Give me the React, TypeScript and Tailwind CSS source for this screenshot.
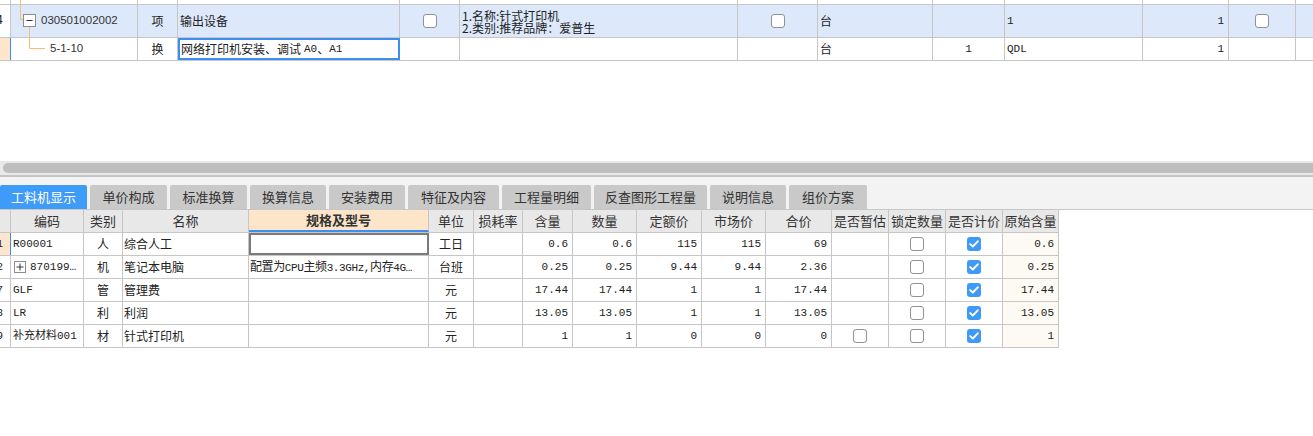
import React from 'react';

const cjk = "font-['Noto_Sans_CJK_SC',sans-serif]";
const mono = "font-['Liberation_Mono','Noto_Sans_CJK_SC',monospace]";

function Box({ on }: { on?: boolean }) {
  if (on) {
    return (
      <span className="w-[14px] h-[14px] rounded-[3px] bg-[#3f99f7] flex items-center justify-center">
        <svg width="10" height="8" viewBox="0 0 10 8">
          <path d="M1.2 4.1 L3.8 6.5 L8.8 1.3" stroke="#fff" strokeWidth="1.9" fill="none" strokeLinecap="round" strokeLinejoin="round" />
        </svg>
      </span>
    );
  }
  return <span className="w-[14px] h-[14px] rounded-[3px] border border-[#929292] bg-white" />;
}

const base = 'shrink-0 h-full flex items-center overflow-hidden whitespace-nowrap';
const cell = `${base} border-r border-[#c6c6c6]`;

function TopTable() {
  return (
    <div className="flex flex-col">
      {/* partial row above */}
      <div className="flex h-[5px] border-b border-[#c6c6c6]">
        <div className={`${cell} w-[11px]`} />
        <div className={`${cell} w-[127px] relative`}>
          <svg className="absolute left-0 top-0" width="126" height="4">
            <line x1="9.5" y1="0" x2="9.5" y2="4" stroke="#f7bf6d" />
          </svg>
        </div>
        <div className={`${cell} w-[40px]`} />
        <div className={`${cell} w-[222px]`} />
        <div className={`${cell} w-[60px]`} />
        <div className={`${cell} w-[278px]`} />
        <div className={`${cell} w-[80px]`} />
        <div className={`${cell} w-[115px]`} />
        <div className={`${cell} w-[72px]`} />
        <div className={`${cell} w-[138px]`} />
        <div className={`${cell} w-[86px]`} />
        <div className={`${cell} w-[67px]`} />
        <div className="flex-1" />
      </div>
      {/* row 1 */}
      <div className="flex h-[33px] border-b border-[#c6c6c6] bg-[#dde9fb] text-[12px] text-[#222]">
        <div className={`${cell} w-[11px] bg-white justify-end pr-[7px] ${mono}`}>4</div>
        <div className={`${cell} w-[127px] relative pl-[30px]`}>
          <svg className="absolute left-0 top-0" width="126" height="32">
            <line x1="9.5" y1="0" x2="9.5" y2="14.5" stroke="#f7bf6d" />
            <line x1="9.5" y1="14.5" x2="12" y2="14.5" stroke="#f7bf6d" />
            <line x1="18.5" y1="22" x2="18.5" y2="32" stroke="#f7bf6d" />
            <rect x="12.5" y="9.5" width="12" height="12" fill="#fff" stroke="#8d8d8d" />
            <line x1="15.5" y1="15.5" x2="21.5" y2="15.5" stroke="#333" />
          </svg>
          <span className="font-['Liberation_Sans',sans-serif] text-[11.5px] text-[#333]">030501002002</span>
        </div>
        <div className={`${cell} w-[40px] justify-center ${cjk}`}>项</div>
        <div className={`${cell} w-[222px] pl-[2px] ${cjk}`}>输出设备</div>
        <div className={`${cell} w-[60px] justify-center`}><Box /></div>
        <div className={`${cell} w-[278px] pl-[2px] ${cjk}`}>
          <div className="leading-[12px] text-[12px] pt-[1px]">
            <div className="h-[12px]">1.名称:针式打印机</div>
            <div className="h-[12px]">2.类别:推荐品牌：爱普生</div>
          </div>
        </div>
        <div className={`${cell} w-[80px] justify-center`}><Box /></div>
        <div className={`${cell} w-[115px] pl-[2px] ${cjk}`}>台</div>
        <div className={`${cell} w-[72px]`} />
        <div className={`${cell} w-[138px] pl-[2px] ${mono} text-[11px]`}>1</div>
        <div className={`${cell} w-[86px] justify-end pr-[4px] ${mono} text-[11px]`}>1</div>
        <div className={`${cell} w-[67px] justify-center`}><Box /></div>
        <div className="flex-1" />
      </div>
      {/* row 2 */}
      <div className="flex h-[23px] border-b border-[#c6c6c6] bg-white text-[12px] text-[#222]">
        <div className={`${base} w-[11px] bg-[#fde6cb] border-r border-[#3b8ff0]`} />
        <div className={`${cell} w-[127px] relative pl-[39px]`}>
          <svg className="absolute left-0 top-0" width="126" height="22">
            <line x1="18.5" y1="0" x2="18.5" y2="10.5" stroke="#f7bf6d" />
            <line x1="18.5" y1="10.5" x2="34" y2="10.5" stroke="#f7bf6d" />
          </svg>
          <span className="font-['Liberation_Sans',sans-serif] text-[11.5px] text-[#333]">5-1-10</span>
        </div>
        <div className={`${cell} w-[40px] justify-center ${cjk}`}>换</div>
        <div className={`${base} w-[222px] pl-[1px] border-2 border-[#3c8fee] ${cjk}`}>
          网络打印机安装、调试 <span className={`${mono} text-[11px] ml-[3px]`}>A0</span>、<span className={`${mono} text-[11px]`}>A1</span>
        </div>
        <div className={`${cell} w-[60px]`} />
        <div className={`${cell} w-[278px]`} />
        <div className={`${cell} w-[80px]`} />
        <div className={`${cell} w-[115px] pl-[2px] ${cjk}`}>台</div>
        <div className={`${cell} w-[72px] justify-center ${mono} text-[11px]`}>1</div>
        <div className={`${cell} w-[138px] pl-[2px] ${mono} text-[11px]`}>QDL</div>
        <div className={`${cell} w-[86px] justify-end pr-[4px] ${mono} text-[11px]`}>1</div>
        <div className={`${cell} w-[67px]`} />
        <div className="flex-1" />
      </div>
    </div>
  );
}

const tabs: { label: string; w: string }[] = [
  { label: '单价构成', w: 'w-[77px]' },
  { label: '标准换算', w: 'w-[77px]' },
  { label: '换算信息', w: 'w-[76px]' },
  { label: '安装费用', w: 'w-[76px]' },
  { label: '特征及内容', w: 'w-[91px]' },
  { label: '工程量明细', w: 'w-[89px]' },
  { label: '反查图形工程量', w: 'w-[113px]' },
  { label: '说明信息', w: 'w-[76px]' },
  { label: '组价方案', w: 'w-[78px]' },
];

function Tabs() {
  return (
    <div className="bg-[#f3f3f3] pt-[8px] border-b border-[#c6c6c6]">
      <div className={`flex gap-[3px] h-[24px] text-[13px] ${cjk}`}>
        <div className="w-[87px] shrink-0 bg-[#3f9bf8] text-white flex items-center justify-center rounded-t-[2px]">工料机显示</div>
        {tabs.map((t) => (
          <div key={t.label} className={`${t.w} shrink-0 bg-[#c9c9c9] text-[#333] flex items-center justify-center rounded-t-[2px]`}>
            {t.label}
          </div>
        ))}
      </div>
    </div>
  );
}

type Row = {
  n: string;
  code: string;
  plus?: boolean;
  type: string;
  name: string;
  spec: boolean;
  unit: string;
  qty: string;
  num: string;
  dp: string;
  mp: string;
  total: string;
  est: boolean;
  orig: string;
};

const rows: Row[] = [
  { n: '1', code: 'R00001', type: '人', name: '综合人工', spec: false, unit: '工日', qty: '0.6', num: '0.6', dp: '115', mp: '115', total: '69', est: false, orig: '0.6' },
  { n: '2', code: '870199…', plus: true, type: '机', name: '笔记本电脑', spec: true, unit: '台班', qty: '0.25', num: '0.25', dp: '9.44', mp: '9.44', total: '2.36', est: false, orig: '0.25' },
  { n: '7', code: 'GLF', type: '管', name: '管理费', spec: false, unit: '元', qty: '17.44', num: '17.44', dp: '1', mp: '1', total: '17.44', est: false, orig: '17.44' },
  { n: '8', code: 'LR', type: '利', name: '利润', spec: false, unit: '元', qty: '13.05', num: '13.05', dp: '1', mp: '1', total: '13.05', est: false, orig: '13.05' },
  { n: '9', code: '补充材料001', type: '材', name: '针式打印机', spec: false, unit: '元', qty: '1', num: '1', dp: '0', mp: '0', total: '0', est: true, orig: '1' },
];

const num = `justify-end pr-[4px] ${mono} text-[11px]`;

function BottomTable() {
  return (
    <div className="w-[1059px] text-[12px] text-[#222]">
      <div className={`flex h-[23px] border-b border-[#c6c6c6] bg-[#e8e8e8] text-[13px] text-[#333] ${cjk}`}>
        <div className={`${cell} w-[11px]`} />
        <div className={`${cell} w-[73px] justify-center`}>编码</div>
        <div className={`${cell} w-[39px] justify-center`}>类别</div>
        <div className={`${cell} w-[126px] justify-center`}>名称</div>
        <div className={`${base} w-[180px] justify-center bg-[#fde5c9] font-bold border-r border-[#c6c6c6] border-b-2 border-b-[#3c8fee]`}>规格及型号</div>
        <div className={`${cell} w-[45px] justify-center`}>单位</div>
        <div className={`${cell} w-[49px] justify-center`}>损耗率</div>
        <div className={`${cell} w-[50px] justify-center`}>含量</div>
        <div className={`${cell} w-[64px] justify-center`}>数量</div>
        <div className={`${cell} w-[65px] justify-center`}>定额价</div>
        <div className={`${cell} w-[64px] justify-center`}>市场价</div>
        <div className={`${cell} w-[66px] justify-center`}>合价</div>
        <div className={`${cell} w-[57px] justify-center`}>是否暂估</div>
        <div className={`${cell} w-[57px] justify-center`}>锁定数量</div>
        <div className={`${cell} w-[57px] justify-center`}>是否计价</div>
        <div className={`${cell} w-[56px] justify-center`}>原始含量</div>
      </div>
      {rows.map((r, i) => (
        <div key={r.n} className="flex h-[23px] border-b border-[#c6c6c6] bg-white">
          {i === 0 ? (
            <div className={`${base} w-[11px] justify-end pr-[7px] ${mono} text-[11px] bg-[#fde6cb] border-r border-[#3b8ff0]`}>{r.n}</div>
          ) : (
            <div className={`${cell} w-[11px] justify-end pr-[7px] ${mono} text-[11px]`}>{r.n}</div>
          )}
          <div className={`${cell} w-[73px] pl-[2px] ${mono} text-[11px]`}>
            {r.plus && (
              <span className="w-[12px] h-[12px] border border-[#8d8d8d] bg-white flex items-center justify-center mr-[4px] ml-[1px] shrink-0">
                <svg width="8" height="8" viewBox="0 0 8 8">
                  <line x1="0.5" y1="4" x2="7.5" y2="4" stroke="#333" />
                  <line x1="4" y1="0.5" x2="4" y2="7.5" stroke="#333" />
                </svg>
              </span>
            )}
            {r.code}
          </div>
          <div className={`${cell} w-[39px] justify-center ${cjk}`}>{r.type}</div>
          <div className={`${cell} w-[126px] pl-[1px] ${cjk}`}>{r.name}</div>
          {i === 0 ? (
            <div className={`${base} w-[180px] border-2 border-[#7a7a7a]`} />
          ) : (
            <div className={`${cell} w-[180px] pl-[1px] ${mono}`}>
              {r.spec && (
                <span className="text-[11px] tracking-[-0.4px]">
                  <span className={`${cjk} text-[12px]`}>配置为</span>CPU<span className={`${cjk} text-[12px]`}>主频</span>3.3GHz,<span className={`${cjk} text-[12px]`}>内存</span>4G…
                </span>
              )}
            </div>
          )}
          <div className={`${cell} w-[45px] justify-center ${cjk}`}>{r.unit}</div>
          <div className={`${cell} w-[49px]`} />
          <div className={`${cell} w-[50px] ${num}`}>{r.qty}</div>
          <div className={`${cell} w-[64px] ${num}`}>{r.num}</div>
          <div className={`${cell} w-[65px] ${num}`}>{r.dp}</div>
          <div className={`${cell} w-[64px] ${num}`}>{r.mp}</div>
          <div className={`${cell} w-[66px] ${num}`}>{r.total}</div>
          <div className={`${cell} w-[57px] justify-center`}>{r.est && <Box />}</div>
          <div className={`${cell} w-[57px] justify-center`}><Box /></div>
          <div className={`${cell} w-[57px] justify-center`}><Box on /></div>
          <div className={`${cell} w-[56px] ${num} bg-[#fdf9f3]`}>{r.orig}</div>
        </div>
      ))}
    </div>
  );
}

export default function App() {
  return (
    <div className={`w-[1313px] h-[436px] bg-white overflow-hidden flex flex-col ${cjk}`}>
      <TopTable />
      <div className="h-[100px] shrink-0 bg-white" />
      <div className="h-[14px] shrink-0 bg-[#e9e9e9] flex items-center pl-[3px]">
        <div className="h-[10px] flex-1 rounded-l-full bg-[#bebebe]" />
      </div>
      <div className="h-[2px] shrink-0 bg-[#c4c4c4]" />
      <Tabs />
      <BottomTable />
    </div>
  );
}
